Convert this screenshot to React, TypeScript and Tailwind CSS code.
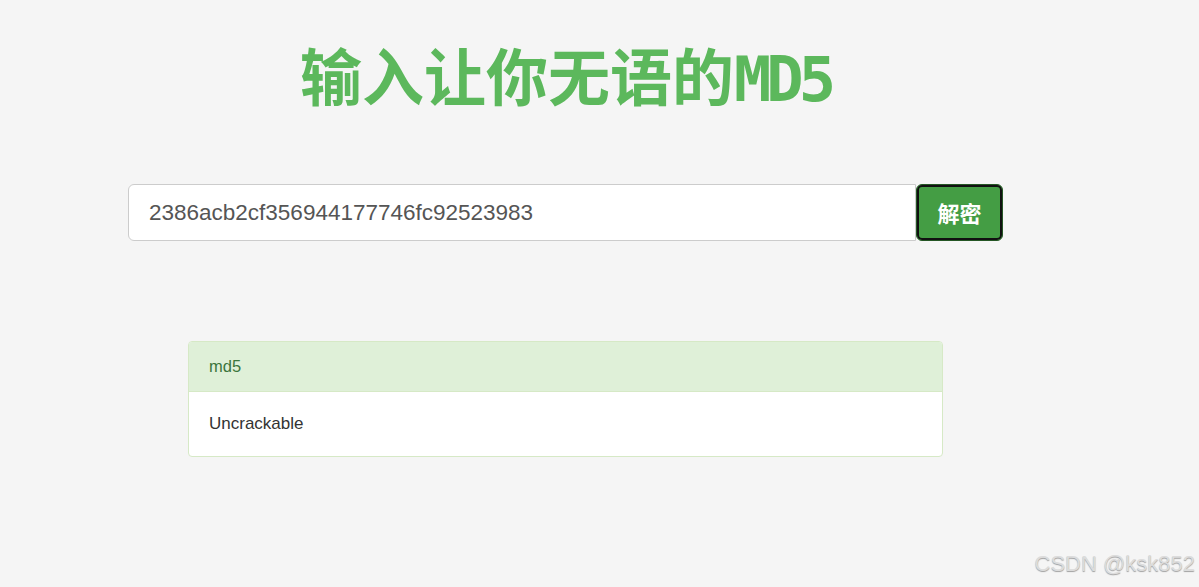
export default function App() {
  return (
    <div
      className="relative min-h-[587px] w-full bg-[#f5f5f5] text-[#333]"
      style={{ fontFamily: '"Liberation Sans", Arial, "Noto Sans CJK SC", sans-serif' }}
    >
      <div className="ml-[128px] w-[875px] pt-[34px]">
        <h1 className="text-center text-[62px] font-bold leading-[80px] text-[#5cb85c] [font-family:'Noto_Sans_CJK_SC',sans-serif]">
          输入让你无语的
          <span className="inline-block origin-left tracking-[-5px] [font-family:'DejaVu_Sans_Mono',monospace]">
            MD5
          </span>
        </h1>

        <div className="mt-[64px] flex h-[57px]">
          <input
            type="text"
            readOnly
            value="2386acb2cf356944177746fc92523983"
            className="h-full flex-1 rounded-l-[6px] border border-[#ccc] bg-white px-5 text-[22.5px] text-[#555] outline-none"
          />
          <button
            type="button"
            className="h-full w-[87px] rounded-[6px] border border-[#255625] bg-[#449d44] text-[22px] font-bold text-white shadow-[inset_0_0_0_2px_#111] [font-family:'Noto_Sans_CJK_SC',sans-serif]"
          >
            解密
          </button>
        </div>
      </div>

      <div className="ml-[188px] mt-[100px] w-[755px] overflow-hidden rounded-[4px] border border-[#d6e9c6] bg-white">
        <div className="flex h-[50px] items-center border-b border-[#d6e9c6] bg-[#dff0d8] px-5 text-[16.5px] text-[#3c763d]">
          md5
        </div>
        <div className="flex h-[64px] items-center px-5 text-[17px] text-[#333]">
          Uncrackable
        </div>
      </div>

      <div className="absolute bottom-[7px] right-[4px] text-[22px] text-[#dcdcdc] [text-shadow:0_1px_1px_#a0a0a0]">
        CSDN @ksk852
      </div>
    </div>
  );
}
